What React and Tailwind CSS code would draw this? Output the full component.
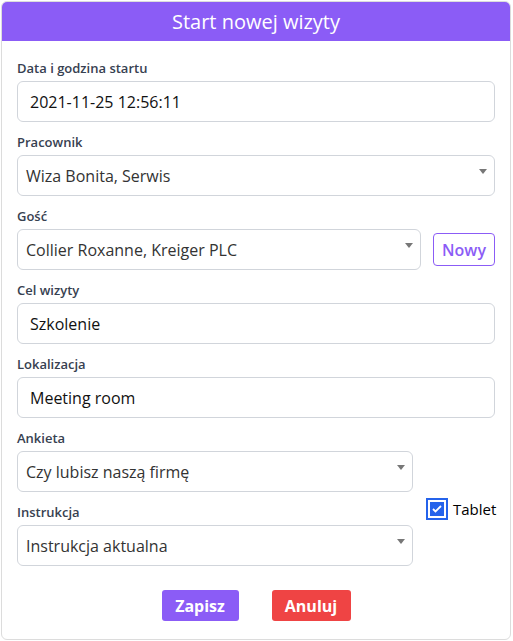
const font = { fontFamily: '"Open Sans", "Noto Sans", sans-serif' };

function Label({ children }) {
    return <div className="text-[13px] leading-5 font-semibold text-[#374151] mb-[3px]">{children}</div>;
}

function TextInput({ value }) {
    return (
        <div className="h-[41px] flex items-center px-[12px] border border-[#d1d5db] rounded-md text-[16px] text-[#111]">
            {value}
        </div>
    );
}

function Select({ value, className = '' }) {
    return (
        <div className={`relative h-[41px] flex items-center pl-[8px] pr-8 border border-[#d1d5db] rounded-md text-[16px] text-[#333] ${className}`}>
            {value}
            <svg className="absolute right-[7px] top-[13px]" width="8" height="5" viewBox="0 0 8 5">
                <path d="M0 0h8L4 5z" fill="#777" />
            </svg>
        </div>
    );
}

export default function App() {
    return (
        <div className="w-[513px] h-[641px] bg-white p-px" style={font}>
            <div className="h-[639px] w-[510px] border border-[#dcdcdc] rounded-md overflow-hidden flex flex-col">
                <div className="h-[39px] bg-[#8b5cf6] flex items-center justify-center text-white text-[20px]">
                    Start nowej wizyty
                </div>
                <div className="px-[15px] pt-[17px] flex flex-col gap-[10px]">
                    <div>
                        <Label>Data i godzina startu</Label>
                        <TextInput value="2021-11-25 12:56:11" />
                    </div>
                    <div>
                        <Label>Pracownik</Label>
                        <Select value="Wiza Bonita, Serwis" />
                    </div>
                    <div>
                        <Label>Gość</Label>
                        <div className="flex items-center gap-[12px]">
                            <Select value="Collier Roxanne, Kreiger PLC" className="w-[404px] shrink-0" />
                            <button className="w-[62px] h-[33px] border border-[#8b5cf6] rounded text-[#8b5cf6] font-semibold text-[16px]">
                                Nowy
                            </button>
                        </div>
                    </div>
                    <div>
                        <Label>Cel wizyty</Label>
                        <TextInput value="Szkolenie" />
                    </div>
                    <div>
                        <Label>Lokalizacja</Label>
                        <TextInput value="Meeting room" />
                    </div>
                    <div className="flex">
                        <div className="w-[396px] shrink-0 flex flex-col gap-[10px]">
                            <div>
                                <Label>Ankieta</Label>
                                <Select value="Czy lubisz naszą firmę" />
                            </div>
                            <div>
                                <Label>Instrukcja</Label>
                                <Select value="Instrukcja aktualna" />
                            </div>
                        </div>
                        <div className="ml-[13px] mt-[70px] flex items-start gap-[5px] h-fit">
                            <div className="w-[22px] h-[22px] border-2 border-[#2563eb] p-[2px] bg-white">
                                <div className="w-full h-full bg-[#2563eb] flex items-center justify-center">
                                    <svg width="10" height="8" viewBox="0 0 10 8">
                                        <path d="M1 4l2.5 2.5L9 1" stroke="white" strokeWidth="1.8" fill="none" />
                                    </svg>
                                </div>
                            </div>
                            <span className="text-[15px] leading-[22px] text-black">Tablet</span>
                        </div>
                    </div>
                    <div className="flex justify-center gap-[33px] mt-[14px]">
                        <button className="w-[77px] h-[31px] bg-[#8b5cf6] text-white font-bold text-[16px] rounded-[3px]">Zapisz</button>
                        <button className="w-[79px] h-[31px] bg-[#ef4444] text-white font-bold text-[16px] rounded-[3px]">Anuluj</button>
                    </div>
                </div>
            </div>
        </div>
    );
}
